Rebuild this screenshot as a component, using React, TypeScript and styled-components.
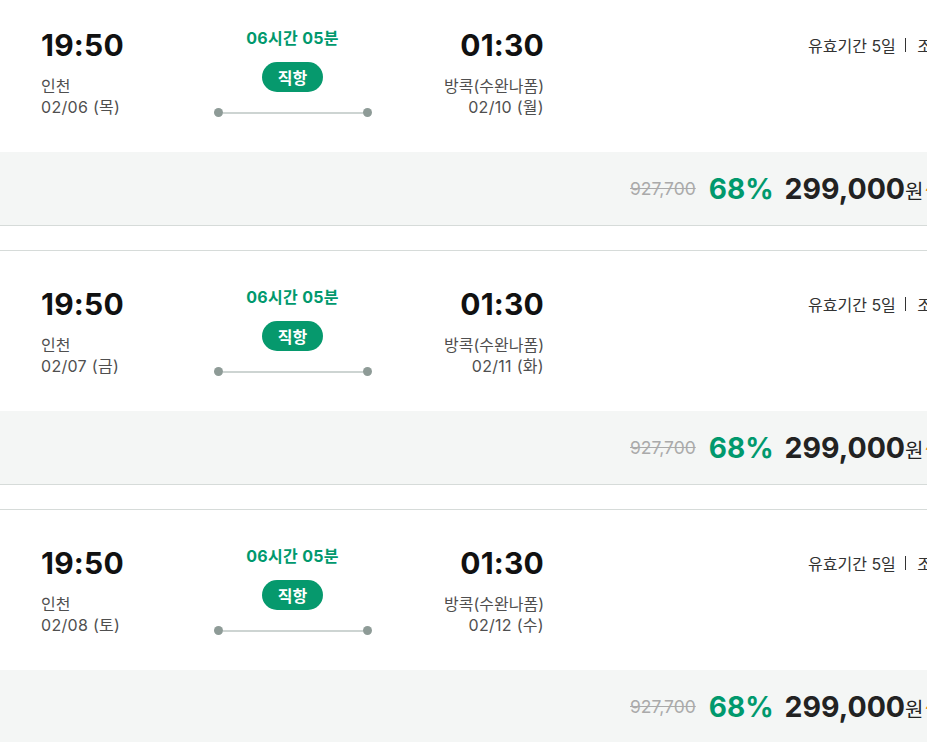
import { FC } from 'react';
import styled, { createGlobalStyle } from 'styled-components';

const GlobalStyle = createGlobalStyle`
  html, body {
    margin: 0;
    padding: 0;
    background: #ffffff;
    overflow: hidden;
  }
  body {
    font-family: Inter, "Noto Sans CJK KR", "Noto Sans", sans-serif;
    color: #222;
  }
`;

// Styled Components
const List = styled.div`
  width: 1000px;
  margin-top: -9px;
  display: flex;
  flex-direction: column;
  gap: 24px;
`;

const Card = styled.div`
  border-top: 1px solid #d6dbd9;
  border-bottom: 1px solid #d6dbd9;
  background: #ffffff;
`;

const Top = styled.div`
  height: 160px;
  box-sizing: border-box;
  padding: 36px 0 0 41px;
  display: flex;
  align-items: flex-start;
`;

const Flight = styled.div`
  width: 503px;
  display: grid;
  grid-template-columns: 1fr 158px 1fr;
`;

const Endpoint = styled.div<{ $align: 'left' | 'right' }>`
  display: flex;
  flex-direction: column;
  align-items: ${p => (p.$align === 'left' ? 'flex-start' : 'flex-end')};
  text-align: ${p => p.$align};
`;

const Time = styled.div`
  font-size: 30px;
  line-height: 34px;
  font-weight: 700;
  color: #111;
  letter-spacing: 0.2px;
`;

const Place = styled.div`
  margin-top: 14px;
  font-size: 16px;
  line-height: 21px;
  color: #4f4f4f;
`;

const DateText = styled.div`
  font-size: 16px;
  line-height: 21px;
  color: #4f4f4f;
  letter-spacing: 0.3px;
`;

const Middle = styled.div`
  display: flex;
  flex-direction: column;
  align-items: center;
`;

const Duration = styled.div`
  font-size: 16px;
  line-height: 20px;
  font-weight: 700;
  color: #00996d;
  letter-spacing: 0.3px;
`;

const Badge = styled.div`
  margin-top: 14px;
  height: 30px;
  padding: 0 16px;
  border-radius: 15px;
  background: #06996d;
  color: #fff;
  font-size: 16px;
  font-weight: 700;
  display: flex;
  align-items: center;
`;

const Route = styled.div`
  margin-top: 16px;
  width: 158px;
  height: 9px;
  display: flex;
  align-items: center;
`;

const Dot = styled.span`
  width: 9px;
  height: 9px;
  border-radius: 50%;
  background: #8e9b97;
  flex-shrink: 0;
`;

const Track = styled.span`
  flex: 1;
  height: 2px;
  background: #cdd4d2;
`;

const Info = styled.div`
  margin-left: 264px;
  height: 34px;
  display: flex;
  align-items: center;
  font-size: 16px;
  color: #333;
  white-space: nowrap;
`;

const Divider = styled.span`
  display: inline-block;
  width: 1.5px;
  height: 14px;
  background: #333;
  margin: 0 11px 0 9px;
`;

const PriceBar = styled.div`
  height: 73px;
  background: #f4f6f5;
  display: flex;
  align-items: center;
  padding-left: 630px;
  white-space: nowrap;
`;

const OldPrice = styled.span`
  font-size: 17.5px;
  color: #aaa;
  text-decoration: line-through;
  margin-right: 13px;
`;

const Discount = styled.span`
  font-size: 28px;
  font-weight: 700;
  color: #00996d;
  margin-right: 11px;
`;

const Price = styled.span`
  font-size: 28.5px;
  font-weight: 700;
  color: #222;
`;

const Won = styled.span`
  font-size: 20px;
  color: #222;
  padding-top: 4px;
`;

const Tilde = styled.span`
  font-size: 18px;
  color: #f08a1c;
  margin-left: 1px;
`;

type Item = { dep: string; arr: string };

const items: Item[] = [
  { dep: '02/06 (목)', arr: '02/10 (월)' },
  { dep: '02/07 (금)', arr: '02/11 (화)' },
  { dep: '02/08 (토)', arr: '02/12 (수)' },
];

const FlightCard: FC<{ item: Item }> = ({ item }) => (
  <Card>
    <Top>
      <Flight>
        <Endpoint $align="left">
          <Time>19:50</Time>
          <Place>인천</Place>
          <DateText>{item.dep}</DateText>
        </Endpoint>
        <Middle>
          <Duration>06시간 05분</Duration>
          <Badge>직항</Badge>
          <Route>
            <Dot />
            <Track />
            <Dot />
          </Route>
        </Middle>
        <Endpoint $align="right">
          <Time>01:30</Time>
          <Place>방콕(수완나폼)</Place>
          <DateText>{item.arr}</DateText>
        </Endpoint>
      </Flight>
      <Info>
        유효기간 5일
        <Divider />
        조건 확인
      </Info>
    </Top>
    <PriceBar>
      <OldPrice>927,700</OldPrice>
      <Discount>68%</Discount>
      <Price>299,000</Price>
      <Won>원</Won>
      <Tilde>~</Tilde>
    </PriceBar>
  </Card>
);

const App: FC = () => (
  <>
    <GlobalStyle />
    <List>
      {items.map(item => (
        <FlightCard key={item.dep} item={item} />
      ))}
    </List>
  </>
);

export default App;
